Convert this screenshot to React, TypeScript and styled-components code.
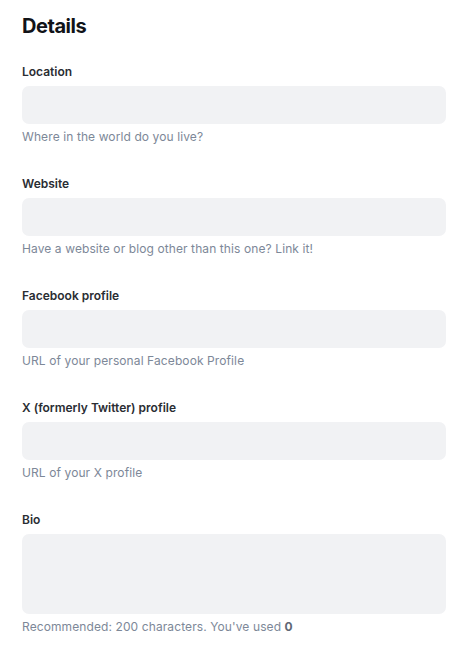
import React from "react";
import styled, { createGlobalStyle } from "styled-components";

const Global = createGlobalStyle`
  html, body { margin: 0; padding: 0; background: #ffffff; }
  body { font-family: Inter, "Noto Sans", sans-serif; -webkit-font-smoothing: antialiased; }
`;

const Page = styled.div`
  padding: 12px 18px 0 22px;
  display: flex;
  flex-direction: column;
`;

const Title = styled.h2`
  margin: 0 0 24px;
  font-size: 20px;
  line-height: 28px;
  font-weight: 700;
  color: #111318;
  letter-spacing: -0.45px;
`;

const Field = styled.div`
  display: flex;
  flex-direction: column;
  margin-bottom: 31px;
`;

const Label = styled.label`
  font-size: 12px;
  line-height: 16px;
  font-weight: 600;
  color: #2a2d33;
  margin-bottom: 6px;
`;

const Input = styled.input`
  box-sizing: border-box;
  height: 38px;
  width: 100%;
  border: none;
  border-radius: 7px;
  background: #f1f2f4;
  padding: 0 12px;
  font: inherit;
  outline: none;
`;

const TextArea = styled.textarea`
  box-sizing: border-box;
  height: 80px;
  width: 100%;
  border: none;
  border-radius: 7px;
  background: #f1f2f4;
  padding: 10px 12px;
  font: inherit;
  resize: none;
  outline: none;
  display: block;
`;

const Help = styled.div`
  margin-top: 5px;
  font-size: 12px;
  line-height: 16px;
  color: #7d8898;
  letter-spacing: 0.1px;
`;

const Count = styled.strong`
  font-weight: 700;
  color: #5f6875;
`;

const fields = [
  { label: "Location", help: "Where in the world do you live?" },
  { label: "Website", help: "Have a website or blog other than this one? Link it!" },
  { label: "Facebook profile", help: "URL of your personal Facebook Profile" },
  { label: "X (formerly Twitter) profile", help: "URL of your X profile" },
];

export default function App() {
  return (
    <>
      <Global />
      <Page>
        <Title>Details</Title>
        {fields.map((f) => (
          <Field key={f.label}>
            <Label>{f.label}</Label>
            <Input />
            <Help>{f.help}</Help>
          </Field>
        ))}
        <Field>
          <Label>Bio</Label>
          <TextArea />
          <Help>
            Recommended: 200 characters. You've used <Count>0</Count>
          </Help>
        </Field>
      </Page>
    </>
  );
}
